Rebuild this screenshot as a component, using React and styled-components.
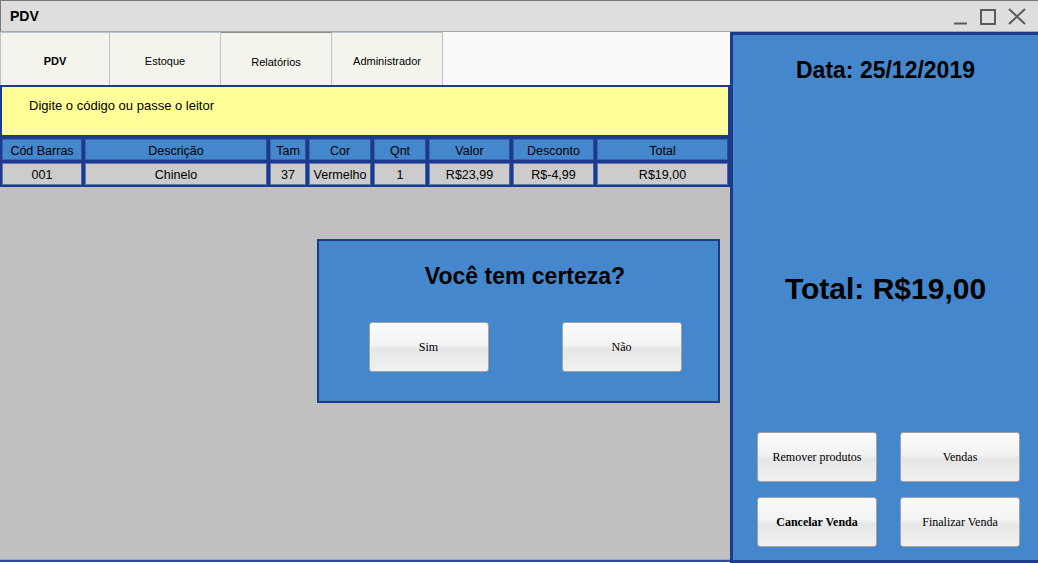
import React from 'react'
import styled, { createGlobalStyle } from 'styled-components'

// cores da tela do PDV
const BLUE = '#4487cc'
const NAVY = '#1d3a8d'

const GlobalStyle = createGlobalStyle`
  html, body {
    margin: 0;
    padding: 0;
    background: #ffffff;
  }
  * {
    box-sizing: border-box;
  }
`

const Window = styled.div`
  width: 1038px;
  height: 563px;
  display: flex;
  flex-direction: column;
  font-family: "Liberation Sans", Arial, sans-serif;
  color: #000;
  overflow: hidden;
`

const TitleBar = styled.div`
  height: 32px;
  flex: none;
  display: flex;
  align-items: center;
  justify-content: space-between;
  background: #dedede;
  border-top: 1px solid #7a7a7a;
  border-left: 1px solid #7a7a7a;
  border-bottom: 1px solid #a8a8a8;
  padding: 0 12px 0 9px;

  h1 {
    margin: 0;
    font-size: 14px;
    font-weight: bold;
  }
`

const Controls = styled.div`
  display: flex;
  align-items: center;
  gap: 12px;
  padding-top: 1px;

  svg {
    display: block;
  }
`

const Body = styled.div`
  flex: 1;
  display: flex;
  min-height: 0;
`

const LeftColumn = styled.div`
  width: 730px;
  display: flex;
  flex-direction: column;
`

const TabBar = styled.div`
  height: 53px;
  flex: none;
  display: flex;
  background: #fafafa;
`

const Tab = styled.div`
  width: 111px;
  display: flex;
  align-items: center;
  justify-content: center;
  padding-top: ${p => (p.$low ? '6px' : '3px')};
  background: #f4f4ec;
  border: 1px solid #b9c4cc;
  border-left: none;
  border-top-color: ${p => (p.$low ? '#8a8a8a' : '#b9c4cc')};
  border-bottom: none;
  font-size: 11px;
  font-weight: ${p => (p.$bold ? 'bold' : 'normal')};

  &:first-child {
    width: 110px;
    border-left: 1px solid #b9c4cc;
  }
`

const CodeInput = styled.div`
  height: 51px;
  flex: none;
  background: #ffff99;
  border: 2px solid ${NAVY};
  border-bottom-width: 1px;
  padding: 11px 0 0 27px;
  font-size: 13px;
  line-height: 16px;
`

const Table = styled.div`
  flex: none;
  display: grid;
  grid-template-columns: 80px 182px 36px 62px 52px 81px 81px 1fr;
  grid-auto-rows: 21px 22px;
  column-gap: 3px;
  row-gap: 3px;
  padding: 3px 2px 2px 2px;
  background: ${NAVY};
  font-size: 12.5px;
`

const Cell = styled.div`
  display: flex;
  align-items: center;
  justify-content: center;
  padding-top: 2px;
  white-space: nowrap;
  overflow: hidden;
  background: ${p => (p.$head ? BLUE : '#cccccc')};
  border: 1px solid ${p => (p.$head ? '#3564b0' : '#5b77b6')};
  border-right-color: ${p => (p.$head ? '#2a4f9e' : '#4a66aa')};
`

const Canvas = styled.div`
  position: relative;
  flex: 1;
  background: #c0c0c0;
  border-bottom: 2px solid #2d4c9c;
  box-shadow: inset 0 -1px 0 #9aa6c8;
  margin-bottom: 1px;
`

const Modal = styled.div`
  position: absolute;
  left: 317px;
  top: 52px;
  width: 403px;
  height: 164px;
  background: ${BLUE};
  border: 2px solid ${NAVY};
  display: flex;
  flex-direction: column;
  align-items: center;
  padding: 20px 0 0 13px;

  h2 {
    margin: 0;
    font-size: 23px;
    line-height: 30px;
    font-weight: bold;
  }
`

const ModalActions = styled.div`
  display: flex;
  gap: 73px;
  margin-top: 31px;
`

const Button = styled.button`
  width: 120px;
  height: 50px;
  border: 1px solid #a2a2a2;
  border-radius: 3px;
  background: linear-gradient(#fbfbfb 0%, #f3f3f3 45%, #e6e6e6 55%, #f1f1f1 100%);
  font-family: "Liberation Serif", "Times New Roman", serif;
  font-size: 12px;
  font-weight: ${p => (p.$bold ? 'bold' : 'normal')};
  color: #000;
  padding: 0;
`

const SidePanel = styled.div`
  flex: 1;
  background: ${BLUE};
  border: 3px solid ${NAVY};
  border-right: none;
  display: flex;
  flex-direction: column;
  align-items: center;
  padding-bottom: 13px;
`

const DateLabel = styled.div`
  margin-top: 22px;
  font-size: 23px;
  line-height: 26px;
  font-weight: bold;
`

const TotalLabel = styled.div`
  margin-top: 189px;
  font-size: 30px;
  line-height: 34px;
  font-weight: bold;
`

const ActionGrid = styled.div`
  margin-top: auto;
  align-self: flex-start;
  display: grid;
  grid-template-columns: 120px 120px;
  column-gap: 23px;
  row-gap: 15px;
  padding-left: 24px;
`

const columns = ['Cód Barras', 'Descrição', 'Tam', 'Cor', 'Qnt', 'Valor', 'Desconto', 'Total']
const item = ['001', 'Chinelo', '37', 'Vermelho', '1', 'R$23,99', 'R$-4,99', 'R$19,00']

export default function App() {
  return (
    <>
      <GlobalStyle />
      <Window>
        <TitleBar>
          <h1>PDV</h1>
          <Controls>
            <svg width="15" height="16" viewBox="0 0 15 16">
              <path d="M1 14.5 H14" stroke="#5a5a5a" strokeWidth="2" />
            </svg>
            <svg width="16" height="16" viewBox="0 0 16 16">
              <rect x="1" y="1" width="14" height="14" fill="none" stroke="#5a5a5a" strokeWidth="2" />
            </svg>
            <svg width="18" height="17" viewBox="0 0 18 17">
              <path d="M1 1 L17 16 M17 1 L1 16" stroke="#5a5a5a" strokeWidth="2" fill="none" />
            </svg>
          </Controls>
        </TitleBar>
        <Body>
          <LeftColumn>
            <TabBar>
              <Tab $bold>PDV</Tab>
              <Tab>Estoque</Tab>
              <Tab $low>Relatórios</Tab>
              <Tab>Administrador</Tab>
            </TabBar>
            <CodeInput>Digite o código ou passe o leitor</CodeInput>
            <Table>
              {columns.map(c => (
                <Cell key={c} $head>{c}</Cell>
              ))}
              {item.map((v, i) => (
                <Cell key={i}>{v}</Cell>
              ))}
            </Table>
            <Canvas>
              <Modal>
                <h2>Você tem certeza?</h2>
                <ModalActions>
                  <Button>Sim</Button>
                  <Button>Não</Button>
                </ModalActions>
              </Modal>
            </Canvas>
          </LeftColumn>
          <SidePanel>
            <DateLabel>Data: 25/12/2019</DateLabel>
            <TotalLabel>Total: R$19,00</TotalLabel>
            <ActionGrid>
              <Button>Remover produtos</Button>
              <Button>Vendas</Button>
              <Button $bold>Cancelar Venda</Button>
              <Button>Finalizar Venda</Button>
            </ActionGrid>
          </SidePanel>
        </Body>
      </Window>
    </>
  )
}
